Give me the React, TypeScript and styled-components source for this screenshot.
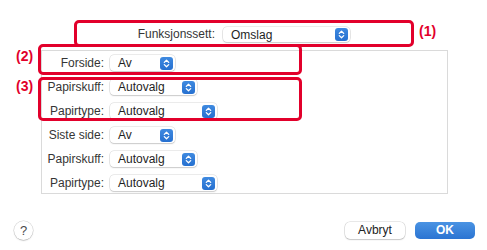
import React from 'react';
import styled, { createGlobalStyle } from 'styled-components';

const GlobalStyle = createGlobalStyle`
    html, body {
        margin: 0;
        padding: 0;
        background: #ffffff;
    }
    body {
        font-family: "Liberation Sans", Arial, sans-serif;
        font-size: 12px;
        color: #262626;
    }
`;

const StyledPage = styled.div`
    position: relative;
    width: 487px;
    height: 250px;
    box-sizing: border-box;
    padding-top: 27px;
    overflow: hidden;
`;

const StyledTopRow = styled.div`
    display: flex;
    align-items: center;
    gap: 8px;
    height: 15px;
`;

const StyledTopLabel = styled.span`
    width: 215px;
    text-align: right;
    color: #353535;
    line-height: 15px;
`;

const StyledPanel = styled.div`
    margin: 8px 39px 0 41px;
    height: 144px;
    box-sizing: border-box;
    border: 1px solid #dadada;
    padding-top: 4px;
    display: grid;
    grid-template-columns: 62px auto;
    grid-auto-rows: 16px;
    column-gap: 6px;
    row-gap: 8px;
    align-content: start;
    justify-items: start;
`;

const StyledLabel = styled.span`
    justify-self: end;
    color: #353535;
    line-height: 16px;
    white-space: nowrap;
`;

const StyledSelect = styled.div<{ $width: number; $height?: number }>`
    position: relative;
    width: ${p => p.$width}px;
    height: ${p => p.$height ?? 16}px;
    box-sizing: border-box;
    display: flex;
    align-items: center;
    justify-content: space-between;
    padding: 0 2px 0 8px;
    background: #ffffff;
    border-radius: 4px;
    box-shadow: 0 0 0 0.5px rgba(0, 0, 0, 0.16), 0 1px 1.5px rgba(0, 0, 0, 0.14);
    color: #1f1f1f;
`;

const StyledFooter = styled.div`
    display: flex;
    align-items: center;
    margin-top: 27px;
    padding: 0 12px 0 14px;
    height: 18px;
`;

const StyledHelp = styled.div`
    width: 19px;
    height: 19px;
    border-radius: 50%;
    box-sizing: border-box;
    background: #ffffff;
    box-shadow: 0 0 0 0.5px rgba(0, 0, 0, 0.18), 0 1px 1.5px rgba(0, 0, 0, 0.14);
    display: flex;
    align-items: center;
    justify-content: center;
    font-size: 13px;
    color: #4a4a4a;
`;

const StyledButton = styled.div<{ $primary?: boolean }>`
    width: 60px;
    height: 17px;
    border-radius: 5px;
    display: flex;
    align-items: center;
    justify-content: center;
    font-size: 12px;
    ${p => p.$primary ? `
        background: linear-gradient(#4a93e3, #2b74d2);
        color: #ffffff;
        font-weight: bold;
        margin-left: 10px;
    ` : `
        background: #ffffff;
        color: #222222;
        margin-left: auto;
        box-shadow: 0 0 0 0.5px rgba(0, 0, 0, 0.18), 0 1px 1.5px rgba(0, 0, 0, 0.14);
    `}
`;

const StyledMark = styled.div<{ $x: number; $y: number; $w: number; $h: number }>`
    position: absolute;
    left: ${p => p.$x}px;
    top: ${p => p.$y}px;
    width: ${p => p.$w}px;
    height: ${p => p.$h}px;
    box-sizing: border-box;
    border: 3px solid #e2002b;
    border-radius: 5px;
    pointer-events: none;
`;

const StyledTag = styled.span<{ $x: number; $y: number }>`
    position: absolute;
    left: ${p => p.$x}px;
    top: ${p => p.$y}px;
    font-size: 14px;
    font-weight: bold;
    color: #e2002b;
    line-height: 14px;
`;

const Stepper = () => (
    <svg width="13" height="13" viewBox="0 0 13 13">
        <defs>
            <linearGradient id="stp" x1="0" y1="0" x2="0" y2="1">
                <stop offset="0" stopColor="#3f8ae0" />
                <stop offset="1" stopColor="#2670d0" />
            </linearGradient>
        </defs>
        <rect x="0" y="0" width="13" height="13" rx="3" fill="url(#stp)" />
        <path d="M4.3 5.4 L6.5 3.3 L8.7 5.4 M4.3 7.6 L6.5 9.7 L8.7 7.6" fill="none" stroke="#ffffff" strokeWidth="1.3" strokeLinecap="round" strokeLinejoin="round" />
    </svg>
);

const Select = ({ value, width, height }: { value: string; width: number; height?: number }) => (
    <StyledSelect $width={width} $height={height}>
        <span>{value}</span>
        <Stepper />
    </StyledSelect>
);

const rows = [
    { label: 'Forside:', value: 'Av', width: 65 },
    { label: 'Papirskuff:', value: 'Autovalg', width: 87 },
    { label: 'Papirtype:', value: 'Autovalg', width: 107 },
    { label: 'Siste side:', value: 'Av', width: 65 },
    { label: 'Papirskuff:', value: 'Autovalg', width: 87 },
    { label: 'Papirtype:', value: 'Autovalg', width: 107 },
];

export default function App() {
    return (
        <StyledPage>
            <GlobalStyle />
            <StyledTopRow>
                <StyledTopLabel>Funksjonssett:</StyledTopLabel>
                <Select value="Omslag" width={127} height={15} />
            </StyledTopRow>
            <StyledPanel>
                {rows.map((r, i) => (
                    <React.Fragment key={i}>
                        <StyledLabel>{r.label}</StyledLabel>
                        <Select value={r.value} width={r.width} />
                    </React.Fragment>
                ))}
            </StyledPanel>
            <StyledFooter>
                <StyledHelp>?</StyledHelp>
                <StyledButton>Avbryt</StyledButton>
                <StyledButton $primary>OK</StyledButton>
            </StyledFooter>

            <StyledMark $x={74} $y={20} $w={340} $h={27} />
            <StyledMark $x={38} $y={44} $w={264} $h={31} />
            <StyledMark $x={38} $y={77} $w={264} $h={44} />
            <StyledTag $x={419} $y={24}>(1)</StyledTag>
            <StyledTag $x={16} $y={49}>(2)</StyledTag>
            <StyledTag $x={16} $y={79}>(3)</StyledTag>
        </StyledPage>
    );
}
